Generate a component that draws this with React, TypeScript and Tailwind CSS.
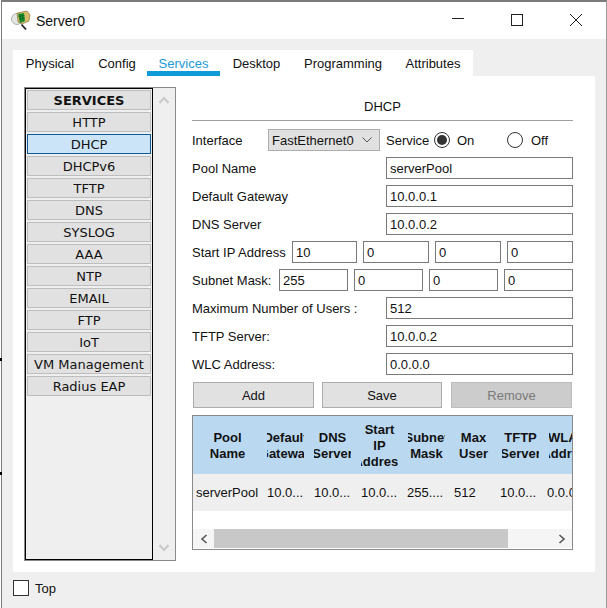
const services = ["HTTP","DHCP","DHCPv6","TFTP","DNS","SYSLOG","AAA","NTP","EMAIL","FTP","IoT","VM Management","Radius EAP"];
const tabs = [["Physical","w-[74px]"],["Config","w-[60px]"],["Services","w-[73px]"],["Desktop","w-[73px]"],["Programming","w-[100px]"],["Attributes","w-[80px]"]];
const cols: {h:string[];v:string;w:string;pad:string}[] = [
  {h:["Pool","Name"],v:"serverPool",w:"w-[69px]",pad:"pl-[3px]"},
  {h:["Default","Gateway"],v:"10.0...",w:"w-[47px]",pad:"pl-[5px]"},
  {h:["DNS","Server"],v:"10.0...",w:"w-[47px]",pad:"pl-[5px]"},
  {h:["Start","IP","Address"],v:"10.0...",w:"w-[47px]",pad:"pl-[5px]"},
  {h:["Subnet","Mask"],v:"255....",w:"w-[47px]",pad:"pl-[4px]"},
  {h:["Max","User"],v:"512",w:"w-[47px]",pad:"pl-[4px]"},
  {h:["TFTP","Server"],v:"10.0...",w:"w-[47px]",pad:"pl-[3px]"},
  {h:["WLAN","Address"],v:"0.0.0.0",w:"w-[47px]",pad:"pl-[3px]"},
];
const inputCls = "h-[22px] border border-[#7a7a7a] bg-white pl-[3px] text-[13px] leading-[20px] text-[#111] outline-none";

function Row({label,value}:{label:string;value:string}){
  return <div className="flex h-[22px] items-center">
    <span className="w-[194px] shrink-0 pt-[2px]">{label}</span>
    <input readOnly value={value} className={inputCls+" w-[187px]"}/>
  </div>;
}
function Radio({on}:{on?:boolean}){
  return <span className="flex h-4 w-4 shrink-0 items-center justify-center rounded-full border border-[#333] bg-white">
    {on && <span className="h-[10px] w-[10px] rounded-full bg-[#333]"/>}
  </span>;
}
function Logo(){
  return <svg width="22" height="22" viewBox="0 0 22 22" className="shrink-0">
    <circle cx="6" cy="9" r="5.500" fill="#e4e6e4" stroke="#aeb4ae"/>
    <path d="M10.500 14.500L15 19.500" stroke="#222" strokeWidth="1.800"/>
    <path d="M6 3l10-2 3 4-1 6-7 3-4-2z" fill="#d9bb6c" stroke="#7d6a30" strokeWidth=".6"/>
    <path d="M7 4l6-1 1 8-5 2z" fill="#1c9a32"/>
    <path d="M8.500 4l1.500 8.500M11 3.500l1.500 8M7.500 6.500l6-1M8 9l6-1" stroke="#0b4f18" strokeWidth=".6"/>
  </svg>;
}
export default function App(){
  return <div className="relative h-[608px] w-[607px] overflow-hidden bg-white pl-px text-[13px] leading-4 text-[#111]" style={{fontFamily:'"Liberation Sans",Arial,sans-serif'}}>
    <span className="absolute left-0 top-[358px] h-[3px] w-[2px] bg-black"/>
    <span className="absolute left-0 top-[472px] h-[3px] w-[2px] bg-black"/>
    <div className="h-[608px] w-[606px] overflow-hidden border-t-2 border-r border-l border-t-[#7b7b7b] border-r-[#9a9a9a] border-l-[#7b7b7b] bg-[#efefef]">
      <div className="flex h-[37px] items-center bg-white pl-[9px]">
        <Logo/>
        <span className="ml-[3px] text-sm">Server0</span>
        <div className="mb-[2px] ml-auto flex items-center">
          <svg width="14" height="14" viewBox="0 0 14 14" className="mr-[45px]"><path d="M1 5.500h12" stroke="#222"/></svg>
          <svg width="14" height="14" viewBox="0 0 14 14" className="mr-[45px]"><rect x="1.500" y="1.500" width="11" height="11" fill="none" stroke="#222"/></svg>
          <svg width="14" height="14" viewBox="0 0 14 14" className="mr-[23px]"><path d="M1 1l12 12M13 1L1 13" stroke="#222"/></svg>
        </div>
      </div>
      <div className="ml-[11px] mt-[11px] w-[582px]">
        <div className="flex h-[26px] w-[460px] bg-white">
          {tabs.map(([t,w])=>{const a=t==="Services";return <div key={t} className={w+" flex h-[26px] items-start justify-center pt-[6px] "+(a?"border-b-[5px] border-[#0f9bd7] text-[#1c9ad6]":"")}>{t}</div>})}
        </div>
        <div className="flex h-[496px] bg-white pl-[11px] pt-[11px]">
          <div className="flex h-[474px] w-[152px] shrink-0 border border-[#8a8a8a]">
            <div className="flex h-[472px] w-[128px] flex-col gap-[2px] border border-black bg-[#efefef] px-px pt-px" style={{fontFamily:'"DejaVu Sans",Verdana,sans-serif'}}>
              <div className="flex h-5 shrink-0 items-center justify-center border border-[#bdbdbd] bg-[#e1e1e1] pt-px font-bold">SERVICES</div>
              {services.map(s=><div key={s} className={"flex h-5 shrink-0 items-center justify-center border pt-px whitespace-nowrap "+(s==="DHCP"?"border-[#0f5a94] bg-[#cce4f7]":"border-[#bdbdbd] bg-[#e1e1e1]")}>{s}</div>)}
            </div>
            <div className="flex flex-1 flex-col items-center justify-between bg-[#efefef] py-2">
              <svg width="12" height="8" viewBox="0 0 12 8"><path d="M1.500 7L6 2l4.500 5" fill="none" stroke="#c8c8c8" strokeWidth="2"/></svg>
              <svg width="12" height="8" viewBox="0 0 12 8"><path d="M1.500 1L6 6l4.500-5" fill="none" stroke="#c8c8c8" strokeWidth="2"/></svg>
            </div>
          </div>
          <div className="ml-[16px] w-[381px]">
            <div className="h-[33px] pt-[12px] text-center">DHCP</div>
            <div className="h-px bg-[#a0a0a0]"/>
            <div className="mt-2 flex h-[22px] items-center">
              <span className="w-[76px] pt-[2px]">Interface</span>
              <div className="flex h-[22px] w-[112px] items-center justify-between border border-[#adadad] bg-[#e1e1e1] pl-[3px] pr-[7px]">
                <span className="pt-[2px]">FastEthernet0</span>
                <svg width="10" height="6" viewBox="0 0 10 6"><path d="M.5.5L5 5 9.500.5" fill="none" stroke="#555"/></svg>
              </div>
              <span className="ml-[6px] w-[48px] pt-[2px]">Service</span>
              <Radio on/>
              <span className="ml-[7px] w-[50px] pt-[2px]">On</span>
              <Radio/>
              <span className="ml-2 pt-[2px]">Off</span>
            </div>
            <div className="mt-[6px] flex flex-col gap-[6px]">
              <Row label="Pool Name" value="serverPool"/>
              <Row label="Default Gateway" value="10.0.0.1"/>
              <Row label="DNS Server" value="10.0.0.2"/>
              <div className="flex h-[22px] items-center">
                <span className="w-[100px] shrink-0 whitespace-nowrap pt-[2px]">Start IP Address</span>
                <div className="flex gap-[6px]">
                  <input readOnly value="10" className={inputCls+" w-[65px]"}/>
                  <input readOnly value="0" className={inputCls+" w-[66px]"}/>
                  <input readOnly value="0" className={inputCls+" w-[66px]"}/>
                  <input readOnly value="0" className={inputCls+" w-[66px]"}/>
                </div>
              </div>
              <div className="flex h-[22px] items-center">
                <span className="w-[87px] shrink-0 pt-[2px]">Subnet Mask:</span>
                <div className="flex gap-[6px]">
                  {["255","0","0","0"].map((v,i)=><input key={i} readOnly value={v} className={inputCls+" w-[69px]"}/>)}
                </div>
              </div>
              <Row label="Maximum Number of Users :" value="512"/>
              <Row label="TFTP Server:" value="10.0.0.2"/>
              <Row label="WLC Address:" value="0.0.0.0"/>
            </div>
            <div className="ml-px mt-[7px] flex h-[26px] w-[379px]">
              <div className="flex w-[121px] items-center justify-center border border-[#adadad] bg-[#e1e1e1] pt-px">Add</div>
              <div className="ml-2 flex w-[120px] items-center justify-center border border-[#adadad] bg-[#e1e1e1] pt-px">Save</div>
              <div className="ml-[9px] flex w-[121px] items-center justify-center border border-[#bdbdbd] bg-[#cccccc] pt-px text-[#7a7a7a]">Remove</div>
            </div>
            <div className="mt-[7px] h-[135px] w-[381px] overflow-hidden border border-[#8a8a8a] bg-white">
              <div className="flex h-[58px] bg-[#bad9f1] pt-[2px] font-bold">
                {cols.map(c=><div key={c.h[0]} className={c.w+" flex shrink-0 justify-center px-[5px]"}>
                  <div className="flex w-full flex-col items-center justify-center overflow-hidden">
                    {c.h.map(l=><span key={l} className="whitespace-nowrap">{l}</span>)}
                  </div>
                </div>)}
              </div>
              <div className="flex h-[37px] items-center bg-[#efefef]">
                {cols.map(c=><div key={c.h[0]} className={c.w+" "+c.pad+" shrink-0 overflow-hidden whitespace-nowrap"}>{c.v}</div>)}
              </div>
              <div className="mt-[18px] flex h-[19px] items-center bg-[#f5f5f5]">
                <div className="flex w-[21px] justify-center"><svg width="8" height="10" viewBox="0 0 8 10"><path d="M6.500 1L2 5l4.500 4" fill="none" stroke="#555" strokeWidth="1.600"/></svg></div>
                <div className="h-[19px] w-[294px] bg-[#c8c8c8]"/>
                <div className="flex flex-1 justify-end pr-[6px]"><svg width="8" height="10" viewBox="0 0 8 10"><path d="M1.500 1L6 5 1.500 9" fill="none" stroke="#555" strokeWidth="1.600"/></svg></div>
              </div>
            </div>
          </div>
        </div>
        <div className="mt-2 flex h-4 items-center">
          <span className="h-4 w-4 border border-[#333] bg-white"/>
          <span className="ml-[6px] pt-[2px]">Top</span>
        </div>
      </div>
    </div>
  </div>;
}
